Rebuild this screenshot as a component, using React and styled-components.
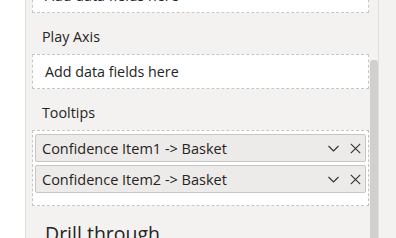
import React from 'react';
import styled, { createGlobalStyle } from 'styled-components';

const GlobalStyle = createGlobalStyle`
  html, body {
    margin: 0;
    padding: 0;
    background: #ffffff;
  }
  body {
    font-family: "Open Sans", "Noto Sans", sans-serif;
    color: #252423;
    overflow: hidden;
  }
`;

const Frame = styled.div`
  display: flex;
  width: 396px;
  height: 238px;
  overflow: hidden;
`;

const Gutter = styled.div`
  width: 25px;
  flex-shrink: 0;
  background: #ffffff;
  border-right: 1px solid #e1dfdd;
`;

const Pane = styled.div`
  display: flex;
  width: 352px;
  flex-shrink: 0;
  background: #f3f2f1;
  border-right: 1px solid #e1dfdd;
`;

const Content = styled.div`
  flex: 1;
  display: flex;
  flex-direction: column;
  padding: 0 1px 0 6px;
  margin-top: -22px;
`;

const ScrollTrack = styled.div`
  width: 8px;
  flex-shrink: 0;
  display: flex;
  flex-direction: column;
  padding-top: 60px;
`;

const ScrollThumb = styled.div`
  flex: 1;
  background: #d2d0ce;
  border-radius: 3px 3px 0 0;
`;

const Side = styled.div`
  flex: 1;
  background: #f3f2f1;
`;

const DropZone = styled.div`
  height: 35px;
  flex-shrink: 0;
  box-sizing: border-box;
  display: flex;
  align-items: center;
  padding-left: 12px;
  background: #ffffff;
  border: 1px dashed #c8c6c4;
  font-size: 14.3px;
  line-height: 20px;
  color: #252423;
`;

const SectionLabel = styled.div`
  font-size: 14.3px;
  line-height: 20px;
  padding: 14px 0 7px 10px;
  color: #252423;
`;

const Well = styled.div`
  display: flex;
  flex-direction: column;
  flex-shrink: 0;
  gap: 3px;
  height: 76px;
  box-sizing: border-box;
  padding: 3px 2px 0 2px;
  background: #ffffff;
  border: 1px dashed #c8c6c4;
`;

const Pill = styled.div`
  display: flex;
  align-items: center;
  height: 28px;
  flex-shrink: 0;
  box-sizing: border-box;
  padding: 0 4px 0 6px;
  background: #edebe9;
  border: 1px solid #c8c6c4;
  border-radius: 2px;
  font-size: 14.5px;
  color: #252423;
`;

const PillText = styled.span`
  flex: 1;
  white-space: nowrap;
`;

const PillIcons = styled.div`
  display: flex;
  align-items: center;
  gap: 11px;
  color: #323130;
`;

const Heading = styled.div`
  font-size: 19.5px;
  line-height: 26px;
  margin-top: 15px;
  padding-left: 13px;
  color: #252423;
`;

const Chevron = () => (
  <svg width="11" height="7" viewBox="0 0 11 7" fill="none">
    <path d="M0.5 1 L5.5 6 L10.5 1" stroke="currentColor" strokeWidth="1.1" />
  </svg>
);

const Close = () => (
  <svg width="11" height="11" viewBox="0 0 11 11" fill="none">
    <path d="M0.8 0.8 L10.2 10.2 M10.2 0.8 L0.8 10.2" stroke="currentColor" strokeWidth="1.1" />
  </svg>
);

const tooltips = ['Confidence Item1 -> Basket', 'Confidence Item2 -> Basket'];

const App = () => (
  <>
    <GlobalStyle />
    <Frame>
      <Gutter />
      <Pane>
        <Content>
          <DropZone>Add data fields here</DropZone>
          <SectionLabel>Play Axis</SectionLabel>
          <DropZone>Add data fields here</DropZone>
          <SectionLabel>Tooltips</SectionLabel>
          <Well>
            {tooltips.map(name => (
              <Pill key={name}>
                <PillText>{name}</PillText>
                <PillIcons>
                  <Chevron />
                  <Close />
                </PillIcons>
              </Pill>
            ))}
          </Well>
          <Heading>Drill through</Heading>
        </Content>
        <ScrollTrack>
          <ScrollThumb />
        </ScrollTrack>
      </Pane>
      <Side />
    </Frame>
  </>
);

export default App;
